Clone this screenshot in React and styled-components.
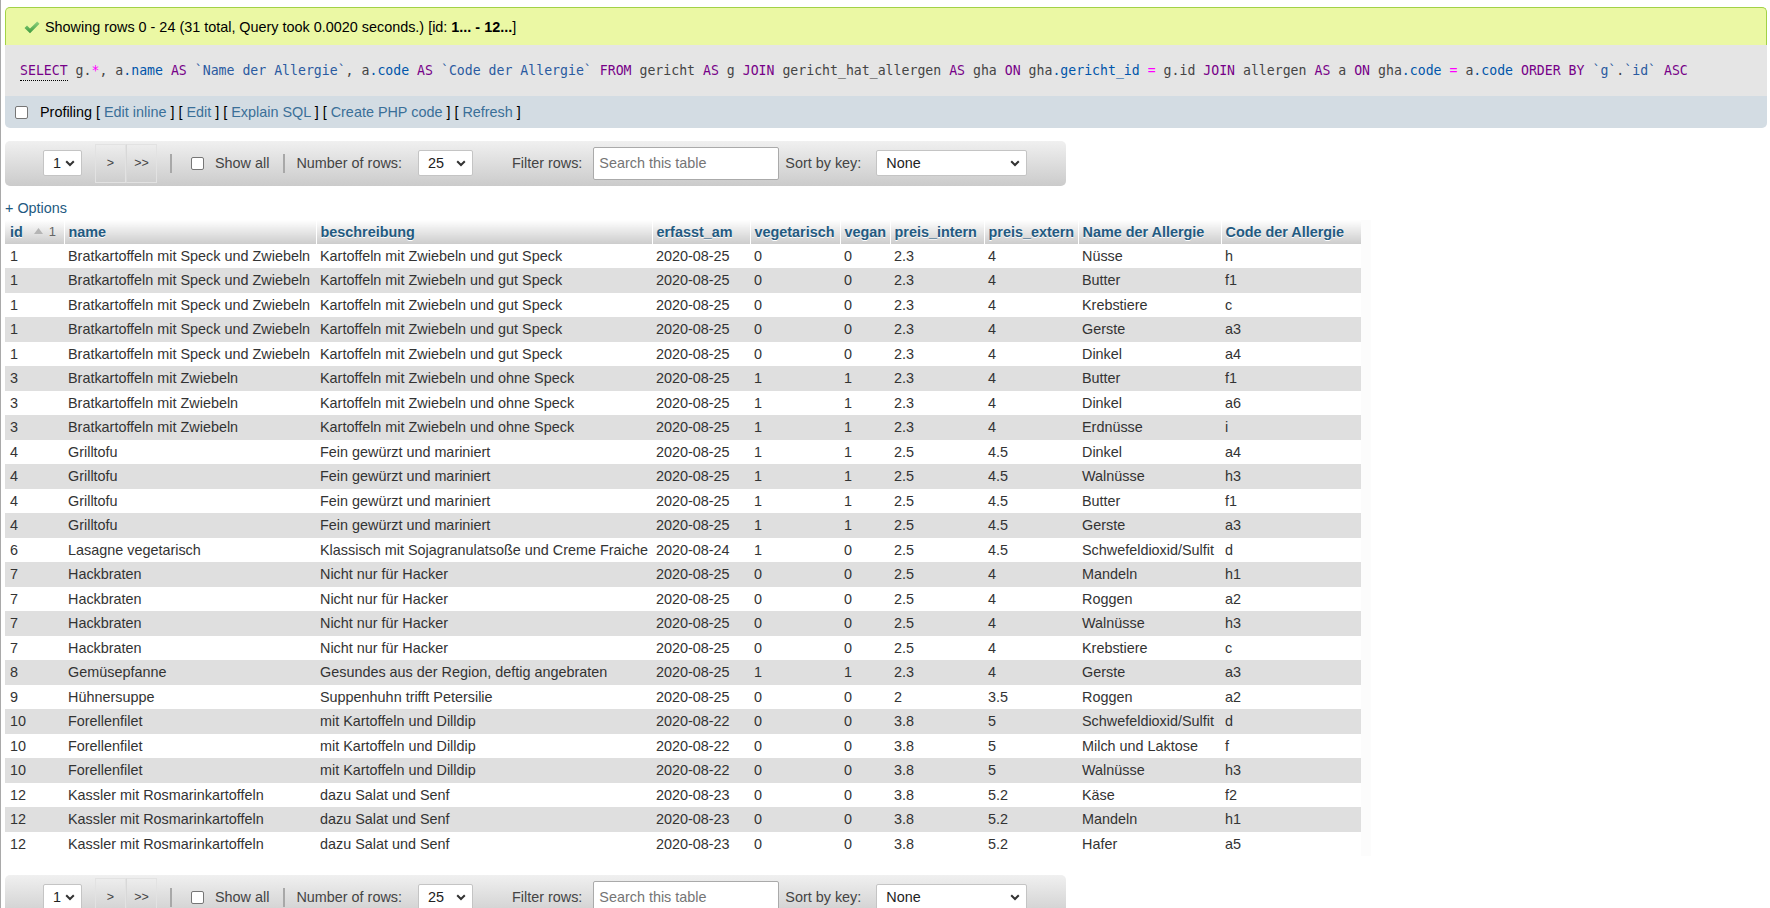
import React from 'react'
import styled, { createGlobalStyle } from 'styled-components'

const GlobalStyle = createGlobalStyle`
  html, body {
    margin: 0;
    padding: 0;
    background: #fff;
    overflow: hidden;
  }
  body {
    font-family: "Liberation Sans", Arial, sans-serif;
    font-size: 14.4px;
    color: #444;
  }
`

const rows = [
  ['1', 'Bratkartoffeln mit Speck und Zwiebeln', 'Kartoffeln mit Zwiebeln und gut Speck', '2020-08-25', '0', '0', '2.3', '4', 'Nüsse', 'h'],
  ['1', 'Bratkartoffeln mit Speck und Zwiebeln', 'Kartoffeln mit Zwiebeln und gut Speck', '2020-08-25', '0', '0', '2.3', '4', 'Butter', 'f1'],
  ['1', 'Bratkartoffeln mit Speck und Zwiebeln', 'Kartoffeln mit Zwiebeln und gut Speck', '2020-08-25', '0', '0', '2.3', '4', 'Krebstiere', 'c'],
  ['1', 'Bratkartoffeln mit Speck und Zwiebeln', 'Kartoffeln mit Zwiebeln und gut Speck', '2020-08-25', '0', '0', '2.3', '4', 'Gerste', 'a3'],
  ['1', 'Bratkartoffeln mit Speck und Zwiebeln', 'Kartoffeln mit Zwiebeln und gut Speck', '2020-08-25', '0', '0', '2.3', '4', 'Dinkel', 'a4'],
  ['3', 'Bratkartoffeln mit Zwiebeln', 'Kartoffeln mit Zwiebeln und ohne Speck', '2020-08-25', '1', '1', '2.3', '4', 'Butter', 'f1'],
  ['3', 'Bratkartoffeln mit Zwiebeln', 'Kartoffeln mit Zwiebeln und ohne Speck', '2020-08-25', '1', '1', '2.3', '4', 'Dinkel', 'a6'],
  ['3', 'Bratkartoffeln mit Zwiebeln', 'Kartoffeln mit Zwiebeln und ohne Speck', '2020-08-25', '1', '1', '2.3', '4', 'Erdnüsse', 'i'],
  ['4', 'Grilltofu', 'Fein gewürzt und mariniert', '2020-08-25', '1', '1', '2.5', '4.5', 'Dinkel', 'a4'],
  ['4', 'Grilltofu', 'Fein gewürzt und mariniert', '2020-08-25', '1', '1', '2.5', '4.5', 'Walnüsse', 'h3'],
  ['4', 'Grilltofu', 'Fein gewürzt und mariniert', '2020-08-25', '1', '1', '2.5', '4.5', 'Butter', 'f1'],
  ['4', 'Grilltofu', 'Fein gewürzt und mariniert', '2020-08-25', '1', '1', '2.5', '4.5', 'Gerste', 'a3'],
  ['6', 'Lasagne vegetarisch', 'Klassisch mit Sojagranulatsoße und Creme Fraiche', '2020-08-24', '1', '0', '2.5', '4.5', 'Schwefeldioxid/Sulfit', 'd'],
  ['7', 'Hackbraten', 'Nicht nur für Hacker', '2020-08-25', '0', '0', '2.5', '4', 'Mandeln', 'h1'],
  ['7', 'Hackbraten', 'Nicht nur für Hacker', '2020-08-25', '0', '0', '2.5', '4', 'Roggen', 'a2'],
  ['7', 'Hackbraten', 'Nicht nur für Hacker', '2020-08-25', '0', '0', '2.5', '4', 'Walnüsse', 'h3'],
  ['7', 'Hackbraten', 'Nicht nur für Hacker', '2020-08-25', '0', '0', '2.5', '4', 'Krebstiere', 'c'],
  ['8', 'Gemüsepfanne', 'Gesundes aus der Region, deftig angebraten', '2020-08-25', '1', '1', '2.3', '4', 'Gerste', 'a3'],
  ['9', 'Hühnersuppe', 'Suppenhuhn trifft Petersilie', '2020-08-25', '0', '0', '2', '3.5', 'Roggen', 'a2'],
  ['10', 'Forellenfilet', 'mit Kartoffeln und Dilldip', '2020-08-22', '0', '0', '3.8', '5', 'Schwefeldioxid/Sulfit', 'd'],
  ['10', 'Forellenfilet', 'mit Kartoffeln und Dilldip', '2020-08-22', '0', '0', '3.8', '5', 'Milch und Laktose', 'f'],
  ['10', 'Forellenfilet', 'mit Kartoffeln und Dilldip', '2020-08-22', '0', '0', '3.8', '5', 'Walnüsse', 'h3'],
  ['12', 'Kassler mit Rosmarinkartoffeln', 'dazu Salat und Senf', '2020-08-23', '0', '0', '3.8', '5.2', 'Käse', 'f2'],
  ['12', 'Kassler mit Rosmarinkartoffeln', 'dazu Salat und Senf', '2020-08-23', '0', '0', '3.8', '5.2', 'Mandeln', 'h1'],
  ['12', 'Kassler mit Rosmarinkartoffeln', 'dazu Salat und Senf', '2020-08-23', '0', '0', '3.8', '5.2', 'Hafer', 'a5'],
]

const columns = [
  { name: 'id', width: 59 },
  { name: 'name', width: 252 },
  { name: 'beschreibung', width: 336 },
  { name: 'erfasst_am', width: 98 },
  { name: 'vegetarisch', width: 90 },
  { name: 'vegan', width: 50 },
  { name: 'preis_intern', width: 94 },
  { name: 'preis_extern', width: 94 },
  { name: 'Name der Allergie', width: 143 },
  { name: 'Code der Allergie', width: 140 },
]

// sql tokens: [type, text]
const sql = [
  ['kw', 'SELECT'], ['pl', ' g.'], ['op', '*'], ['pl', ', a'], ['var', '.name'], ['pl', ' '], ['kw', 'AS'],
  ['pl', ' '], ['str', '`Name der Allergie`'], ['pl', ', a'], ['var', '.code'], ['pl', ' '], ['kw', 'AS'],
  ['pl', ' '], ['str', '`Code der Allergie`'], ['pl', ' '], ['kw', 'FROM'], ['pl', ' gericht '], ['kw', 'AS'],
  ['pl', ' g '], ['kw', 'JOIN'], ['pl', ' gericht_hat_allergen '], ['kw', 'AS'], ['pl', ' gha '], ['kw', 'ON'],
  ['pl', ' gha'], ['var', '.gericht_id'], ['pl', ' '], ['op', '='], ['pl', ' g.id '], ['kw', 'JOIN'],
  ['pl', ' allergen '], ['kw', 'AS'], ['pl', ' a '], ['kw', 'ON'], ['pl', ' gha'], ['var', '.code'], ['pl', ' '],
  ['op', '='], ['pl', ' a'], ['var', '.code'], ['pl', ' '], ['kw', 'ORDER BY'], ['pl', ' '], ['str', '`g`'],
  ['pl', '.'], ['str', '`id`'], ['pl', ' '], ['kw', 'ASC'],
]

const tokenColors = {
  kw: '#770088',
  pl: '#444',
  op: '#ff00ff',
  var: '#0055aa',
  str: '#2a5aa0',
}

function CheckIcon() {
  return (
    <svg width="16" height="13" viewBox="0 0 16 13">
      <defs>
        <linearGradient id="chk" x1="0" y1="0" x2="0" y2="1">
          <stop offset="0" stopColor="#8fd37f" />
          <stop offset="1" stopColor="#3c9a3c" />
        </linearGradient>
      </defs>
      <path d="M0.5 7 L3 4.6 L6 7.4 L13.2 0.5 L15.5 2.8 L6 12.2 Z" fill="url(#chk)" />
    </svg>
  )
}

function Chevron() {
  return (
    <svg width="10" height="7" viewBox="0 0 10 7">
      <polyline points="1.2,1.2 5,5 8.8,1.2" fill="none" stroke="#333" strokeWidth="2" />
    </svg>
  )
}

function SortArrow() {
  return (
    <svg width="9" height="6" viewBox="0 0 9 6">
      <polygon points="0,6 4.5,0 9,6" fill="#b5b5b5" />
    </svg>
  )
}

function NavBar() {
  return (
    <Navigation>
      <Select width={39}>1<Chevron /></Select>
      <ButtonGroup>
        <NavButton>&gt;</NavButton>
        <NavButton>&gt;&gt;</NavButton>
      </ButtonGroup>
      <Separator gap={13} />
      <CheckBox gap={19} />
      <NavLabel gap={11}>Show all</NavLabel>
      <Separator gap={14} />
      <NavLabel gap={11}>Number of rows:</NavLabel>
      <Select width={55} gap={16}>25<Chevron /></Select>
      <NavLabel gap={39}>Filter rows:</NavLabel>
      <SearchInput>Search this table</SearchInput>
      <NavLabel gap={6}>Sort by key:</NavLabel>
      <Select width={151} gap={15}>None<Chevron /></Select>
    </Navigation>
  )
}

export default function App() {
  return (
    <>
      <GlobalStyle />
      <Page>
        <ResultBox>
          <Success>
            <CheckIcon />
            <span>
              Showing rows 0 - 24 (31 total, Query took 0.0020 seconds.) [id: <b>1... - 12...</b>]
            </span>
          </Success>
          <SqlBlock>
            <Code>
              {sql.map(([type, text], i) => (
                <Token key={i} color={tokenColors[type]} doc={i === 0}>{text}</Token>
              ))}
            </Code>
          </SqlBlock>
          <Tools>
            <CheckBox />
            <ToolsText>
              Profiling [ <ToolLink>Edit inline</ToolLink> ] [ <ToolLink>Edit</ToolLink> ] [ <ToolLink>Explain SQL</ToolLink> ] [ <ToolLink>Create PHP code</ToolLink> ] [ <ToolLink>Refresh</ToolLink> ]
            </ToolsText>
          </Tools>
        </ResultBox>

        <NavBar />

        <Options>+ Options</Options>

        <TableWrap>
          <DataTable>
            <colgroup>
              {columns.map(c => <col key={c.name} style={{ width: c.width }} />)}
            </colgroup>
            <thead>
              <tr>
                {columns.map(c => (
                  <Th key={c.name}>
                    {c.name === 'id' ? (
                      <IdHead>id<SortArrow /><SortNum>1</SortNum></IdHead>
                    ) : c.name}
                  </Th>
                ))}
              </tr>
            </thead>
            <tbody>
              {rows.map((r, i) => (
                <Row key={i} even={i % 2 === 1}>
                  {r.map((v, j) => <Td key={j}>{v}</Td>)}
                </Row>
              ))}
            </tbody>
          </DataTable>
        </TableWrap>

        <BottomNav>
          <NavBar />
        </BottomNav>
      </Page>
    </>
  )
}

const Page = styled.div`
  min-height: 100vh;
  box-sizing: border-box;
  border-left: 1px solid #a9a9a9;
  padding: 7px 3px 0 4px;
`

const ResultBox = styled.div`
  width: 1762px;
`

const Success = styled.div`
  box-sizing: border-box;
  height: 38px;
  display: flex;
  align-items: center;
  gap: 5px;
  padding-left: 18px;
  background: #ebf8a4;
  border: 1px solid #a2d246;
  border-bottom: none;
  border-radius: 5px 5px 0 0;
  color: #000;
  b {
    font-weight: bold;
  }
  svg {
    margin-top: 1px;
  }
`

const SqlBlock = styled.div`
  height: 51px;
  display: flex;
  align-items: center;
  padding-left: 15px;
  background: #e5e5e5;
`

const Code = styled.code`
  font-family: "DejaVu Sans Mono", "Liberation Mono", monospace;
  font-size: 13.2px;
  white-space: pre;
`

const Token = styled.span`
  color: ${p => p.color};
  ${p => p.doc && `
    border-bottom: 1px dotted #000;
    padding-bottom: 2px;
  `}
`

const Tools = styled.div`
  height: 32px;
  display: flex;
  align-items: center;
  padding-left: 10px;
  background: #d3dce3;
  border-radius: 0 0 5px 5px;
`

const ToolsText = styled.span`
  margin-left: 12px;
  color: #000;
`

const ToolLink = styled.a`
  color: #3a6f98;
  text-decoration: none;
`

const Navigation = styled.div`
  box-sizing: border-box;
  width: 1061px;
  height: 45px;
  margin-top: 12.7px;
  display: flex;
  align-items: center;
  padding-left: 38px;
  border-radius: 5px;
  background: linear-gradient(to bottom, #f0f0f0, #cbcbcb);
  color: #444;
`

const Select = styled.div`
  box-sizing: border-box;
  width: ${p => p.width}px;
  height: 26px;
  margin-left: ${p => p.gap || 0}px;
  display: flex;
  align-items: center;
  justify-content: space-between;
  padding: 0 6px 0 9px;
  background: #fff;
  border: 1px solid #c4c4c4;
  border-radius: 2px;
  color: #222;
`

const ButtonGroup = styled.div`
  display: flex;
  height: 39px;
  margin-left: 13px;
`

const NavButton = styled.div`
  box-sizing: border-box;
  width: 31px;
  height: 39px;
  display: flex;
  align-items: center;
  justify-content: center;
  border: 1px solid #e2e2e2;
  font-size: 12.5px;
  color: #444;
  & + & {
    border-left: 1px solid #d8d8d8;
  }
`

const Separator = styled.span`
  width: 2px;
  height: 19px;
  margin-left: ${p => p.gap}px;
  background: #a8a8a8;
`

const CheckBox = styled.span`
  box-sizing: border-box;
  display: inline-block;
  width: 13px;
  height: 13px;
  margin-left: ${p => p.gap || 0}px;
  border: 1px solid #767676;
  border-radius: 2px;
  background: #fff;
`

const NavLabel = styled.span`
  margin-left: ${p => p.gap}px;
  white-space: nowrap;
`

const SearchInput = styled.div`
  box-sizing: border-box;
  width: 186px;
  height: 33px;
  margin-left: 11px;
  display: flex;
  align-items: center;
  padding-left: 5px;
  background: #fff;
  border: 1px solid #aaa;
  border-radius: 2px;
  color: #757575;
`

const Options = styled.div`
  margin-top: 14.3px;
  line-height: 17px;
  margin-bottom: 2.7px;
  color: #235a81;
`

const TableWrap = styled.div`
  display: inline-block;
  vertical-align: top;
  padding-right: 10px;
  background: #fcfcfc;
`

const DataTable = styled.table`
  width: 1356px;
  table-layout: fixed;
  border-collapse: collapse;
  font-size: 14.4px;
`

const Th = styled.th`
  height: 24px;
  padding: 0 4px;
  text-align: left;
  font-weight: bold;
  color: #235a81;
  text-shadow: 0 1px 0 #fff;
  white-space: nowrap;
  background: linear-gradient(to bottom, #ffffff, #cccccc);
  border-right: 1px solid #fff;
  &:last-child {
    border-right: none;
  }
`

const IdHead = styled.span`
  display: flex;
  align-items: center;
  padding-left: 1px;
  svg {
    margin-left: 11px;
    margin-bottom: 2px;
  }
`

const SortNum = styled.span`
  margin-left: 6px;
  font-weight: normal;
  color: #666;
  font-size: 13px;
  text-shadow: none;
`

const Row = styled.tr`
  height: 24.5px;
  background: ${p => (p.even ? '#dfdfdf' : '#fff')};
`

const Td = styled.td`
  padding: 0 4px;
  white-space: nowrap;
  overflow: hidden;
  color: #333;
  &:first-child {
    padding-left: 5px;
  }
`

const BottomNav = styled.div`
  padding-top: 6px;
`
